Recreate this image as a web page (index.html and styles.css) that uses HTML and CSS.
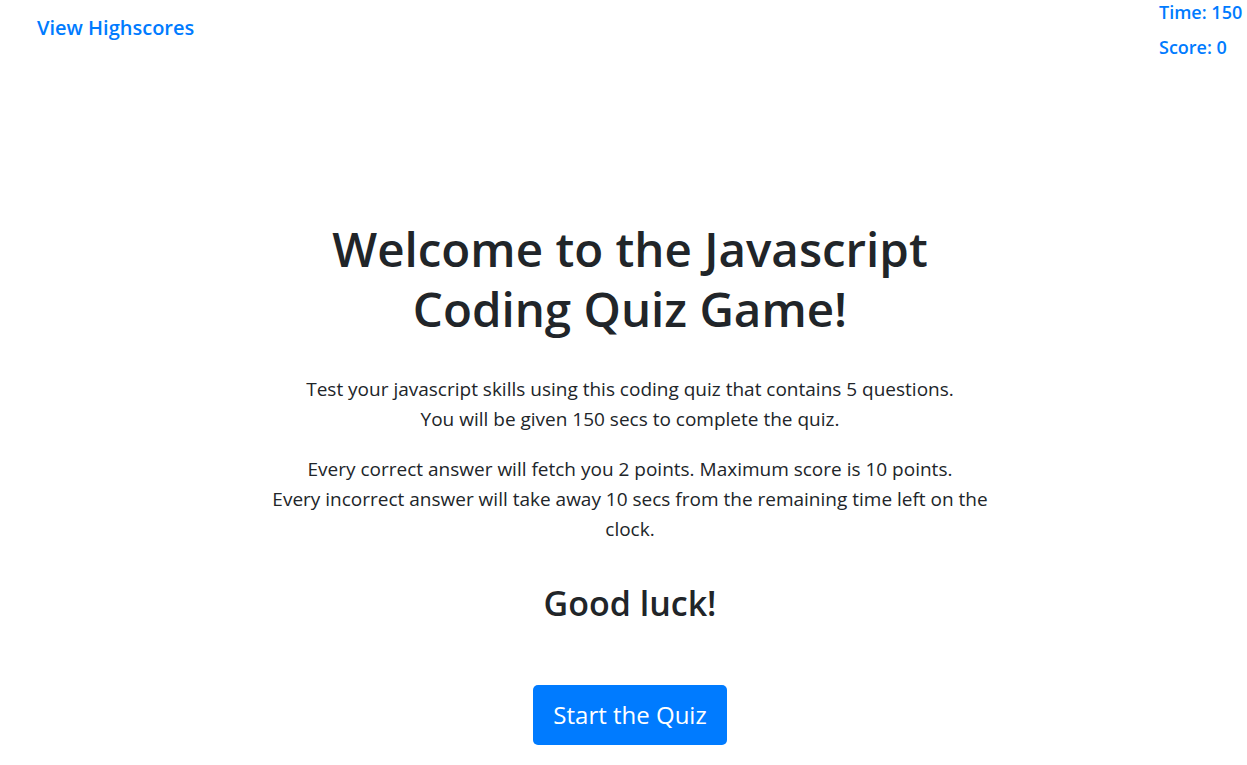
FILE: index.html
```html
<!DOCTYPE html>
<html lang="en">
<head>
<meta charset="utf-8">
<title>Javascript Coding Quiz</title>
<link rel="stylesheet" href="styles.css">
</head>
<body>
<header class="topbar">
  <a class="highscores" href="#">View Highscores</a>
  <div class="stats">
    <div class="stat">Time: 150</div>
    <div class="stat">Score: 0</div>
  </div>
</header>
<main class="intro">
  <h1 class="title">Welcome to the Javascript Coding Quiz Game!</h1>
  <p class="lead">Test your javascript skills using this coding quiz that contains 5 questions.<br>You will be given 150 secs to complete the quiz.</p>
  <p class="lead">Every correct answer will fetch you 2 points. Maximum score is 10 points.<br>Every incorrect answer will take away 10 secs from the remaining time left on the clock.</p>
  <h2 class="luck">Good luck!</h2>
  <button class="start" type="button">Start the Quiz</button>
</main>
</body>
</html>
```

FILE: styles.css
```css
html, body {
  margin: 0;
  padding: 0;
}
body {
  font-family: "Open Sans", "Noto Sans", sans-serif;
  color: #212529;
  background: #fff;
}
.topbar {
  display: flex;
  justify-content: space-between;
  align-items: flex-start;
  padding: 0 0 0 37px;
}
.highscores {
  color: #007bff;
  text-decoration: none;
  font-size: 20px;
  font-weight: 600;
  line-height: 28px;
  margin-top: 14px;
}
.stats {
  display: flex;
  flex-direction: column;
  width: 88px;
}
.stat {
  color: #007bff;
  font-size: 18px;
  font-weight: 600;
  line-height: 34px;
  margin-top: -5px;
}
.stat + .stat {
  margin-top: 1px;
}
.intro {
  width: 740px;
  margin: 155px auto 0;
  padding-left: 13px;
  text-align: center;
}
.title {
  font-size: 47.5px;
  font-weight: 600;
  line-height: 60px;
  margin: 0 0 35px;
  padding: 0 60px;
}
.lead {
  font-size: 19px;
  line-height: 30px;
  margin: 0 0 20px;
}
.luck {
  font-size: 34px;
  font-weight: 600;
  line-height: 40px;
  margin: 39px 0 62px;
}
.start {
  font-family: inherit;
  font-size: 24px;
  line-height: 36px;
  padding: 12px 20px;
  color: #fff;
  background: #007bff;
  border: none;
  border-radius: 5px;
}
```
